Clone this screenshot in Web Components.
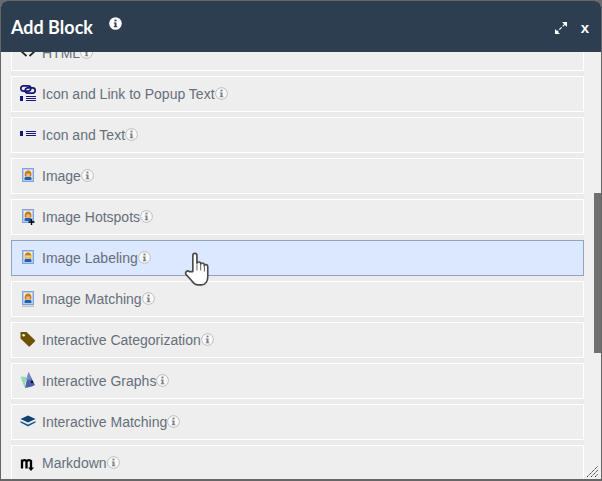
<!DOCTYPE html>
<html lang="en">
<head>
<meta charset="utf-8">
<title>Add Block</title>
<style>
html,body{margin:0;padding:0;background:#6b6b6b;}
body{width:602px;height:481px;overflow:hidden;}
</style>
</head>
<body>
<add-block-dialog>
  <span slot="title">Add Block</span>
  <block-row icon="code">HTML</block-row>
  <block-row icon="linktext">Icon and Link to Popup Text</block-row>
  <block-row icon="icontext">Icon and Text</block-row>
  <block-row icon="image">Image</block-row>
  <block-row icon="hotspots">Image Hotspots</block-row>
  <block-row icon="labeling" active>Image Labeling</block-row>
  <block-row icon="matching">Image Matching</block-row>
  <block-row icon="tag">Interactive Categorization</block-row>
  <block-row icon="graphs">Interactive Graphs</block-row>
  <block-row icon="layers">Interactive Matching</block-row>
  <block-row icon="markdown">Markdown</block-row>
</add-block-dialog>
<script>
const portrait = (extra) => `
  <rect x="3.500" y="1.500" width="11" height="13" fill="#b4cdf0" stroke="#7ea3dc"/>
  <rect x="5" y="3" width="8" height="10" fill="#f4ecd0"/>
  <path d="M5.500 13v-2.500q3.500-2 7 0V13z" fill="#1f5fb5"/>
  <path d="M5.800 9.500C5 4 8 3.600 9.300 3.600c2.700 0 3.600 2.400 2.900 5.900z" fill="#c47c22"/>
  <path d="M7.400 6.500h3.400v3.300H7.400z" fill="#ecbb8c"/>${extra}`;
const ICONS = {
  code: `<path d="M7.500 2 2 7l5.500 5M10.500 2 16 7l-5.500 5" fill="none" stroke="#222" stroke-width="1.700"/>`,
  linktext: `<g fill="none" stroke="#14147a" stroke-width="1.700"><rect x="1.800" y="0.900" width="10" height="5.200" rx="2.600"/><rect x="6.200" y="2.900" width="10" height="5.200" rx="2.600"/></g>
    <rect x="1" y="11" width="3" height="5" fill="#14147a"/><path d="M7 11.500h10M7 13.500h10M7 15.500h10" stroke="#14147a" stroke-width="1"/>`,
  icontext: `<rect x="1" y="5" width="3" height="5" fill="#14147a"/><path d="M7 5.500h10M7 7.500h10M7 9.500h10" stroke="#14147a" stroke-width="1"/>`,
  image: portrait(''),
  hotspots: portrait(`<path d="M12.500 11v6M9.500 14h6" stroke="#000" stroke-width="1.400"/>`),
  labeling: portrait(`<rect x="5" y="6.500" width="8" height="2" fill="#e9d27a"/>`),
  matching: portrait(`<rect x="3" y="15.500" width="12" height="1.500" fill="#c4c4c4"/>`),
  tag: `<path d="M1.500 1h6l8.300 8a1 1 0 0 1 0 1.500l-4.800 4.800a1 1 0 0 1-1.500 0L1.500 7.500z" fill="#6d5200"/><circle cx="4.600" cy="4.200" r="1.300" fill="#eee"/>`,
  graphs: `<path d="M1.500 4.500 7.500 5l-2 10.500z" fill="#8fdcae"/><path d="M9.500 0 16 13l-3 1.500-7 1.500z" fill="#4c5fa8"/><path d="M9.500 0 12.500 7.500l-5.500.5z" fill="#7a8ad0"/><circle cx="13" cy="10" r="1.200" fill="#111"/>`,
  layers: `<path d="M9 2.500 16.500 6 9 9.500 1.500 6z" fill="#12406f"/><path d="M1.500 8 9 11.500 16.500 8v1.500L9 13.500 1.500 9.500z" fill="#1a5a96"/>`,
  markdown: `<path d="M3 14.500V5.500M3 7.500Q5 5 7.500 7v7.500M7.500 7.500Q9.500 5 12 7v7" fill="none" stroke="#000" stroke-width="2.300"/><path d="M9 13.500h6L12 17z" fill="#000"/>`
};

class BlockIcon extends HTMLElement {
  connectedCallback() {
    const r = this.shadowRoot || this.attachShadow({ mode: 'open' });
    r.innerHTML = `<style>:host{display:block;width:18px;height:18px;flex:none}svg{display:block}</style>
      <svg width="18" height="18" viewBox="0 0 18 18" aria-hidden="true">${ICONS[this.getAttribute('name')] || ''}</svg>`;
  }
}
customElements.define('block-icon', BlockIcon);

class InfoMark extends HTMLElement {
  connectedCallback() {
    const r = this.shadowRoot || this.attachShadow({ mode: 'open' });
    const light = this.hasAttribute('light');
    r.innerHTML = `<style>:host{display:block;width:13px;height:13px;flex:none}svg{display:block}</style>
      <svg width="13" height="13" viewBox="0 0 13 13" aria-hidden="true">
        <circle cx="6.500" cy="6.500" r="${light ? 6.3 : 5.9}" fill="${light ? '#fff' : '#f8f8f8'}" ${light ? '' : 'stroke="#bdbdbd" stroke-width="1"'}/>
        <g fill="${light ? '#2c3e50' : '#808080'}">
          <rect x="5.500" y="2.600" width="2" height="1.800"/>
          <path d="M4.800 5.400H7.500V9.200H8.300V10.300H4.800V9.200H5.600V6.400H4.800z"/>
        </g>
      </svg>`;
  }
}
customElements.define('info-mark', InfoMark);

class BlockRow extends HTMLElement {
  connectedCallback() {
    const r = this.shadowRoot || this.attachShadow({ mode: 'open' });
    r.innerHTML = `<style>
      :host{display:flex;align-items:center;box-sizing:border-box;height:36px;flex:none;
        padding-left:7px;background:#eeeeee;border:1px solid #fff;
        font:14px/16px "Liberation Sans",Arial,sans-serif;color:#666e7b;cursor:pointer}
      :host([active]){background:#dbe8ff;border-color:#8aa5c8}
      .label{margin-left:5px}
      info-mark{position:relative;top:-1px}
    </style><block-icon name="${this.getAttribute('icon')}"></block-icon><span class="label"><slot></slot></span><info-mark></info-mark>`;
  }
}
customElements.define('block-row', BlockRow);

const dlgTpl = document.createElement('template');
dlgTpl.innerHTML = `<style>
  :host{display:flex;flex-direction:column;position:relative;box-sizing:border-box;width:602px;height:481px;
    overflow:hidden;border-radius:7px 7px 0 0;border:solid #666;border-width:1px 1px 2px 1px;background:#ececec}
  header{display:flex;align-items:center;flex:none;height:51px;background:#2c3e50;color:#fff;padding:0 12px 0 10px;
    font:700 18px/24px Lato,"Liberation Sans",sans-serif;position:relative;z-index:1}
  header info-mark{margin:-7px 0 0 16px}
  .spacer{flex:1}
  .expand{display:block;margin-right:13px;margin-top:2px}
  .close{font:700 15px/18px "Liberation Sans",Arial,sans-serif;margin-top:2px}
  .body{flex:1;min-height:0;overflow:hidden;padding-right:9px;background:#f0f0f0}
  .list{display:flex;flex-direction:column;gap:5px;margin:-17px 0 0 10px;background:#ebebeb;width:573px}
  .thumb{position:absolute;right:0;top:192px;width:7px;height:160px;background:#707070}
  .grip{position:absolute;right:2px;bottom:1px;display:block}
  .hand{position:absolute;left:182px;top:250px;display:block;z-index:2}
</style>
<header><slot name="title"></slot><info-mark light></info-mark><span class="spacer"></span>
  <svg class="expand" width="14" height="14" viewBox="0 0 14 14" aria-hidden="true">
    <path d="M2 12 12 2" stroke="#fff" stroke-width="1.200" stroke-dasharray="3.200 1.500" fill="none"/>
    <path d="M8 1h5v5zM1 8v5h5z" fill="#fff"/>
  </svg>
  <span class="close">x</span></header>
<div class="body"><div class="list"><slot></slot></div></div>
<div class="thumb"></div>
<svg class="grip" width="13" height="13" viewBox="0 0 13 13" aria-hidden="true">
  <path d="M1 12 12 1M5 12l7-7M9 12l3-3" stroke="#333" stroke-width="1" stroke-dasharray="1.500 .7" fill="none"/>
</svg>
<svg class="hand" width="31" height="36" viewBox="0 0 30 35" aria-hidden="true">
  <path d="M9.500 20V4.500c0-3 4-3 4 0V12c0-1.800 3.600-1.800 3.600 0v1c0-1.800 3.500-1.800 3.500.2v1.200c0-1.800 3.400-1.500 3.400.6V25c0 4-2 8-6 8h-3.500c-3 0-4.500-1.500-6.500-4.500L3 23c-1.600-2.500 1-4.500 3-3z"
    fill="#fff" stroke="#4a4a4a" stroke-width="1.600" stroke-linejoin="round"/>
  <path d="M13.500 13v6M17.100 13v6M20.700 14v6" stroke="#666" stroke-width="1"/>
</svg>`;
class AddBlockDialog extends HTMLElement {
  connectedCallback() {
    const r = this.shadowRoot || this.attachShadow({ mode: 'open' });
    r.replaceChildren(dlgTpl.content.cloneNode(true));
  }
}
customElements.define('add-block-dialog', AddBlockDialog);
</script>
</body>
</html>
